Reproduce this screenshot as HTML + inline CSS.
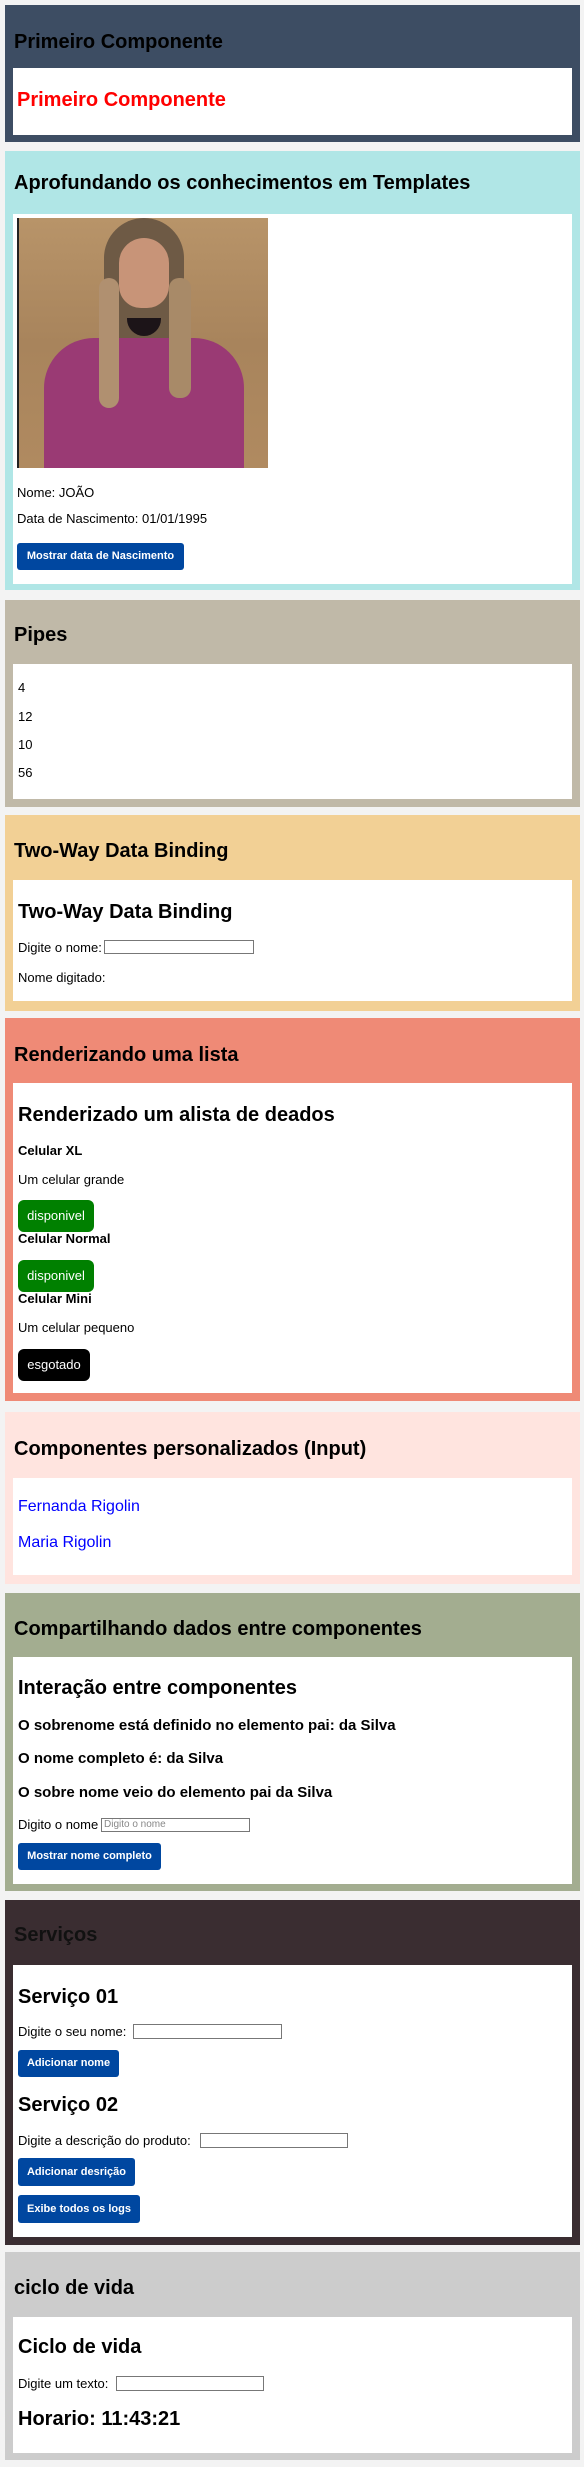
<!DOCTYPE html>
<html><head><meta charset="utf-8"><style>
*{margin:0;padding:0;box-sizing:border-box}
body{width:584px;height:2467px;background:#f3f3f3;font-family:"Liberation Sans",Arial,sans-serif;position:relative;overflow:hidden;color:#000}
.s{position:absolute;left:5px;width:575px}
.w{position:absolute;left:8px;right:8px;background:#fff}
.t{position:absolute;white-space:nowrap;line-height:20px}
.h{font-size:20px;font-weight:bold;line-height:24px}
.p{font-size:13px;line-height:16px}
.b{font-size:13px;font-weight:bold;line-height:16px}
.q{font-size:15px;font-weight:bold;line-height:18px}
.btn{position:absolute;background:#0047a0;color:#fff;font-size:11px;font-weight:bold;border-radius:3px;text-align:center;white-space:nowrap}
.in{position:absolute;border:1px solid #777;background:#fff;height:15px}
.bd{position:absolute;left:5px;color:#fff;font-size:13px;border-radius:6px;text-align:center;height:32px;line-height:32px}
</style></head><body>

<div class="s" style="top:5px;height:137px;background:#3d4d63">
 <div class="t h" style="left:9px;top:25px">Primeiro Componente</div>
 <div class="w" style="top:63px;height:67px"><div class="t h" style="left:4px;top:20px;color:#f00">Primeiro Componente</div></div>
</div>

<div class="s" style="top:151px;height:439px;background:#b0e6e6">
 <div class="t h" style="left:9px;top:20px">Aprofundando os conhecimentos em Templates</div>
 <div class="w" style="top:63px;height:370px">
  <div style="position:absolute;left:4px;top:4px;width:251px;height:250px;background:linear-gradient(180deg,#b89469,#a8845c 50%,#b08a60);border-left:2px solid #222;overflow:hidden">
   <div style="position:absolute;left:85px;top:0;width:80px;height:200px;background:#6e5a45;border-radius:40px 40px 10px 10px"></div>
   <div style="position:absolute;left:100px;top:20px;width:50px;height:70px;background:#c89478;border-radius:25px 25px 22px 22px"></div>
   <div style="position:absolute;left:108px;top:100px;width:34px;height:18px;background:#1c1418;border-radius:0 0 17px 17px"></div>
   <div style="position:absolute;left:25px;top:120px;width:200px;height:140px;background:#9a3a74;border-radius:50px 50px 0 0"></div>
   <div style="position:absolute;left:80px;top:60px;width:20px;height:130px;background:#b09070;border-radius:10px"></div>
   <div style="position:absolute;left:150px;top:60px;width:22px;height:120px;background:#a88a68;border-radius:10px"></div>
  </div>
  <div class="t p" style="left:4px;top:271px">Nome: JOÃO</div>
  <div class="t p" style="left:4px;top:297px">Data de Nascimento: 01/01/1995</div>
  <div class="btn" style="left:4px;top:329px;width:167px;height:27px;line-height:27px">Mostrar data de Nascimento</div>
 </div>
</div>

<div class="s" style="top:600px;height:207px;background:#c0b9a8">
 <div class="t h" style="left:9px;top:23px">Pipes</div>
 <div class="w" style="top:64px;height:135px">
  <div class="t p" style="left:5px;top:16px">4</div>
  <div class="t p" style="left:5px;top:45px">12</div>
  <div class="t p" style="left:5px;top:73px">10</div>
  <div class="t p" style="left:5px;top:101px">56</div>
 </div>
</div>

<div class="s" style="top:815px;height:196px;background:#f2d095">
 <div class="t h" style="left:9px;top:24px">Two-Way Data Binding</div>
 <div class="w" style="top:65px;height:121px">
  <div class="t h" style="left:5px;top:20px">Two-Way Data Binding</div>
  <div class="t p" style="left:5px;top:60px">Digite o nome:</div>
  <div class="in" style="left:91px;top:60px;width:150px;height:14px"></div>
  <div class="t p" style="left:5px;top:90px">Nome digitado:</div>
 </div>
</div>

<div class="s" style="top:1018px;height:383px;background:#ef8a76">
 <div class="t h" style="left:9px;top:25px">Renderizando uma lista</div>
 <div class="w" style="top:65px;height:310px">
  <div class="t h" style="left:5px;top:20px">Renderizado um alista de deados</div>
  <div class="t b" style="left:5px;top:60px">Celular XL</div>
  <div class="t p" style="left:5px;top:89px">Um celular grande</div>
  <div class="bd" style="top:117px;width:76px;background:#008000">disponivel</div>
  <div class="t b" style="left:5px;top:148px">Celular Normal</div>
  <div class="bd" style="top:177px;width:76px;background:#008000">disponivel</div>
  <div class="t b" style="left:5px;top:208px">Celular Mini</div>
  <div class="t p" style="left:5px;top:237px">Um celular pequeno</div>
  <div class="bd" style="top:266px;width:72px;background:#000">esgotado</div>
 </div>
</div>

<div class="s" style="top:1412px;height:172px;background:#ffe4df">
 <div class="t h" style="left:9px;top:25px">Componentes personalizados (Input)</div>
 <div class="w" style="top:66px;height:97px">
  <div class="t" style="left:5px;top:19px;font-size:16px;color:#00f">Fernanda Rigolin</div>
  <div class="t" style="left:5px;top:55px;font-size:16px;color:#00f">Maria Rigolin</div>
 </div>
</div>

<div class="s" style="top:1593px;height:298px;background:#a3ad90">
 <div class="t h" style="left:9px;top:24px">Compartilhando dados entre componentes</div>
 <div class="w" style="top:64px;height:227px">
  <div class="t h" style="left:5px;top:19px">Interação entre componentes</div>
  <div class="t q" style="left:5px;top:60px">O sobrenome está definido no elemento pai: da Silva</div>
  <div class="t q" style="left:5px;top:93px">O nome completo é: da Silva</div>
  <div class="t q" style="left:5px;top:127px">O sobre nome veio do elemento pai da Silva</div>
  <div class="t p" style="left:5px;top:160px">Digito o nome</div>
  <div class="in" style="left:88px;top:161px;width:149px;height:14px;font-size:10px;color:#888;line-height:12px;padding-left:2px">Digito o nome</div>
  <div class="btn" style="left:5px;top:186px;width:143px;height:27px;line-height:27px">Mostrar nome completo</div>
 </div>
</div>

<div class="s" style="top:1900px;height:345px;background:#3a2d31">
 <div class="t h" style="left:9px;top:23px;color:#111">Serviços</div>
 <div class="w" style="top:65px;height:272px">
  <div class="t h" style="left:5px;top:20px">Serviço 01</div>
  <div class="t p" style="left:5px;top:59px">Digite o seu nome:</div>
  <div class="in" style="left:120px;top:59px;width:149px;height:15px"></div>
  <div class="btn" style="left:5px;top:85px;width:101px;height:27px;line-height:27px">Adicionar nome</div>
  <div class="t h" style="left:5px;top:128px">Serviço 02</div>
  <div class="t p" style="left:5px;top:168px">Digite a descrição do produto:</div>
  <div class="in" style="left:187px;top:168px;width:148px;height:15px"></div>
  <div class="btn" style="left:5px;top:193px;width:117px;height:28px;line-height:28px">Adicionar desrição</div>
  <div class="btn" style="left:5px;top:230px;width:122px;height:28px;line-height:28px">Exibe todos os logs</div>
 </div>
</div>

<div class="s" style="top:2252px;height:208px;background:#cccccc">
 <div class="t h" style="left:9px;top:24px">ciclo de vida</div>
 <div class="w" style="top:65px;height:136px">
  <div class="t h" style="left:5px;top:18px">Ciclo de vida</div>
  <div class="t p" style="left:5px;top:59px">Digite um texto:</div>
  <div class="in" style="left:103px;top:59px;width:148px;height:15px"></div>
  <div class="t h" style="left:5px;top:90px">Horario: 11:43:21</div>
 </div>
</div>

</body></html>
